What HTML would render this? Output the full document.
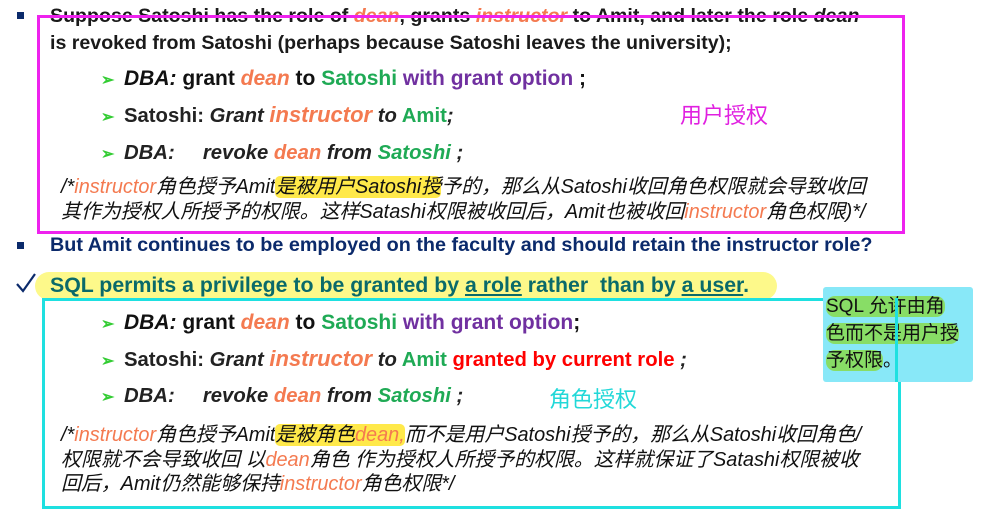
<!DOCTYPE html>
<html><head><meta charset="utf-8"><style>
body{margin:0;width:1000px;height:515px;background:#fff;position:relative;overflow:hidden;font-family:"Liberation Sans","Noto Sans CJK SC",sans-serif}
.a{position:absolute;white-space:nowrap}
.b{font-weight:bold;font-size:19.6px;color:#222}
.c{font-size:21px;font-weight:bold;color:#111}
.o{color:#f47a50}.g{color:#1faa55}.p{color:#7030a0}.r{color:#f00}
.i{font-style:italic}
.cm{font-size:19.9px;font-style:italic;color:#111;line-height:24.5px}
.arr{color:#3c3;font-size:16px;font-weight:bold}
.hl{background:#ffe94a;border-radius:5px}
</style></head><body>
<div class="a" style="left:17px;top:12px;width:7px;height:7px;background:#0b2a6b"></div>
<div class="a b" style="left:50px;top:3px;line-height:27px;color:#1a1a1a">Suppose Satoshi has the role of <span class="o i">dean</span>, grants <span class="o i">instructor</span> to Amit, and later the role <i>dean</i><br>is revoked from Satoshi (perhaps because Satoshi leaves the university);</div>
<div class="a" style="left:37px;top:15px;width:862px;height:213px;border:3px solid #ee22ee"></div>
<div class="a arr" style="left:101px;top:70px">➢</div>
<div class="a c" style="left:124px;top:67px"><i>DBA:</i> grant <span class="o i">dean</span> to <span class="g">Satoshi</span> <span class="p">with grant option</span> ;</div>
<div class="a arr" style="left:101px;top:107px">➢</div>
<div class="a b" style="left:124px;top:102px;font-size:20.3px">Satoshi: <i>Grant</i> <span class="o i" style="font-size:22px">instructor</span> <i>to</i> <span class="g">Amit</span><i>;</i></div>
<div class="a arr" style="left:101px;top:144px">➢</div>
<div class="a b i" style="left:124px;top:142px;font-size:20.3px">DBA: &nbsp;&nbsp;&nbsp; revoke <span class="o">dean</span> from <span class="g">Satoshi</span> ;</div>
<div class="a cm" style="left:61px;top:175px">/*<span class="o">instructor</span>角色授予Amit<span class="hl">是被用户Satoshi授</span>予的，那么从Satoshi收回角色权限就会导致收回<br>其作为授权人所授予的权限。这样Satashi权限被收回后，Amit也被收回<span class="o">instructor</span>角色权限)*/</div>
<div class="a" style="left:680px;top:98px;font-size:22px;color:#e020e0">用户授权</div>
<div class="a" style="left:17px;top:242px;width:7px;height:7px;background:#0b2a6b"></div>
<div class="a b" style="left:50px;top:234px;color:#0b2a6b;font-size:19.8px">But Amit continues to be employed on the faculty and should retain the instructor role?</div>
<div class="a" style="left:35px;top:272px;width:742px;height:28px;background:#fdf98a;border-radius:14px"></div>
<svg class="a" style="left:15px;top:272px" width="22" height="22"><path d="M2 12 L8 19 L20 2" fill="none" stroke="#0b2a6b" stroke-width="2.2"/></svg>
<div class="a b" style="left:50px;top:273px;color:#0a6a6a;font-size:21.3px">SQL permits a privilege to be granted by <u>a role</u> rather &nbsp;than by <u>a user</u>.</div>
<div class="a" style="left:42px;top:298px;width:853px;height:205px;border:3px solid #1ee0e0"></div>
<div class="a arr" style="left:101px;top:314px">➢</div>
<div class="a c" style="left:124px;top:311px"><i>DBA:</i> grant <span class="o i">dean</span> to <span class="g">Satoshi</span> <span class="p">with grant option</span>;</div>
<div class="a arr" style="left:101px;top:351px">➢</div>
<div class="a b" style="left:124px;top:346px;font-size:20.3px">Satoshi: <i>Grant</i> <span class="o i" style="font-size:22px">instructor</span> <i>to</i> <span class="g">Amit</span> <span class="r">granted by current role</span> <i>;</i></div>
<div class="a arr" style="left:101px;top:387px">➢</div>
<div class="a b i" style="left:124px;top:385px;font-size:20.3px">DBA: &nbsp;&nbsp;&nbsp; revoke <span class="o">dean</span> from <span class="g">Satoshi</span> ;</div>
<div class="a" style="left:549px;top:382px;font-size:22px;color:#22d8d8">角色授权</div>
<div class="a cm" style="left:61px;top:423px">/*<span class="o">instructor</span>角色授予Amit<span class="hl">是被角色<span class="o">dean,</span></span>而不是用户Satoshi授予的，那么从Satoshi收回角色/<br>权限就不会导致收回 以<span class="o">dean</span>角色 作为授权人所授予的权限。这样就保证了Satashi权限被收<br>回后，Amit仍然能够保持<span class="o">instructor</span>角色权限*/</div>
<div class="a" style="left:823px;top:287px;width:150px;height:95px;background:#88e8f8;border-radius:3px"></div>
<div class="a" style="left:826px;top:293px;font-size:19px;line-height:27px;color:#111"><span style="background:#88dd66;border-radius:9px">SQL 允许由角</span><br><span style="background:#88dd66;border-radius:9px">色而不是用户授</span><br><span style="background:#88dd66;border-radius:9px">予权限</span>。</div>
<div class="a" style="left:895px;top:298px;width:3px;height:84px;background:#1ee0e0"></div>
</body></html>
